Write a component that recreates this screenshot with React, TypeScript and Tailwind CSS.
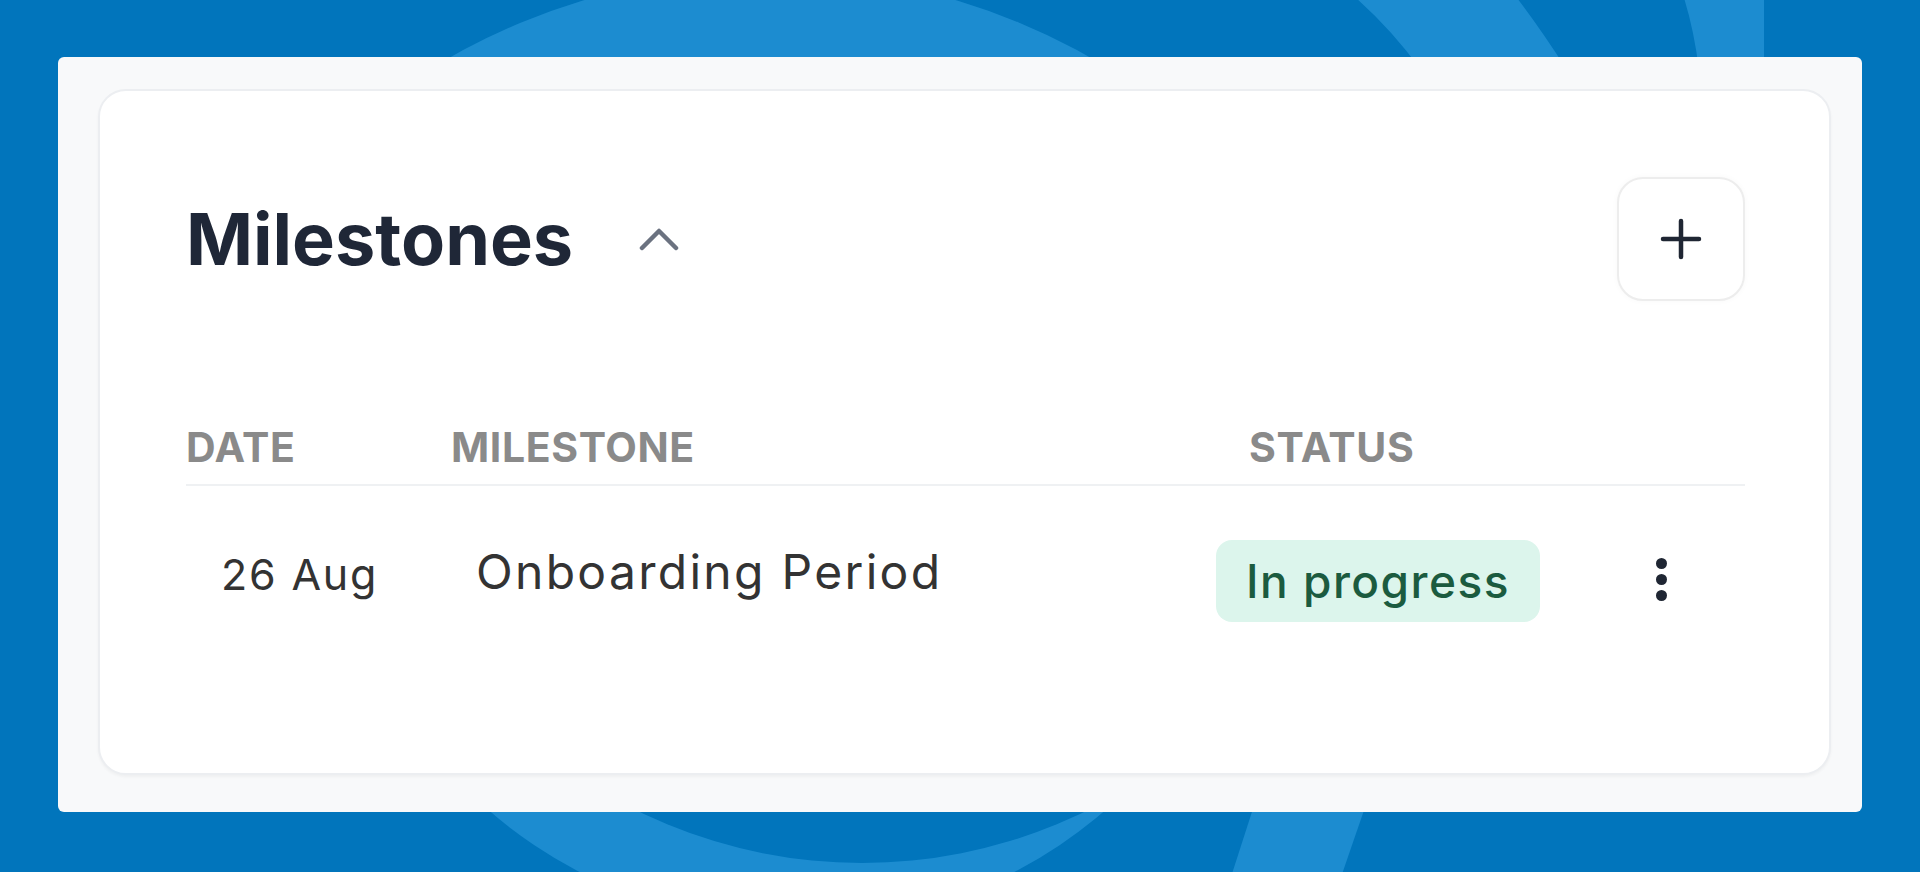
import React from "react";

function Background() {
  return (
    <svg
      className="absolute inset-0"
      width={1920}
      height={872}
      viewBox="0 0 1920 872"
      aria-hidden="true"
    >
      <defs>
        <clipPath id="topClip">
          <rect x="0" y="0" width="1920" height="120" />
        </clipPath>
        <clipPath id="bottomClip">
          <rect x="0" y="760" width="1920" height="112" />
        </clipPath>
      </defs>
      <g clipPath="url(#topClip)" fill="#1c8cd0">
        <circle cx="770" cy="623" r="650" />
        <path d="M1356 -2 L1517 -2 Q1540 28 1567 70 L1421 70 Q1392 30 1356 -2 Z" />
        <path d="M1684 -2 L1764 -2 L1764 70 L1699 70 Q1694 30 1684 -2 Z" />
      </g>
      <g clipPath="url(#bottomClip)">
        <circle cx="797" cy="453" r="472" fill="#1c8cd0" />
        <circle cx="862" cy="354" r="509" fill="#0175bc" />
        <path d="M1259 790 L1371 790 L1340 880 L1230 880 Z" fill="#1c8cd0" />
      </g>
    </svg>
  );
}

function ChevronUp() {
  return (
    <svg width="40" height="26" viewBox="0 0 40 26" fill="none">
      <polyline
        points="3,22 20,5 37,22"
        stroke="#6b7280"
        strokeWidth="4.5"
        strokeLinecap="round"
        strokeLinejoin="round"
      />
    </svg>
  );
}

function PlusIcon() {
  return (
    <svg width="42" height="42" viewBox="0 0 42 42" fill="none">
      <path
        d="M21 3 V39 M3 21 H39"
        stroke="#1f2633"
        strokeWidth="4.5"
        strokeLinecap="round"
      />
    </svg>
  );
}

export default function App() {
  return (
    <div
      className="relative w-[1920px] h-[872px] overflow-hidden bg-[#0175bc]"
      style={{ fontFamily: "Inter, 'Noto Sans', 'Liberation Sans', sans-serif" }}
    >
      <Background />
      <div className="relative flex h-full pt-[57px] pb-[60px] pl-[58px] pr-[58px]">
        <div className="flex flex-1 bg-[#f8f9fa] rounded-[6px] pl-[40px] pr-[31px] pt-[32px] pb-[37px]">
          <div className="flex flex-1 flex-col bg-white border-2 border-[#eceef1] rounded-[28px] shadow-[0_2px_3px_rgba(0,0,0,0.04)] pl-[86px] pr-[84px] pt-[86px]">
            {/* Title row */}
            <div className="flex items-center justify-between h-[124px]">
              <div className="flex items-center gap-[66px]">
                <h2 className="text-[72px] leading-none font-bold text-[#1f2737]">
                  Milestones
                </h2>
                <ChevronUp />
              </div>
              <button className="flex items-center justify-center w-[128px] h-[124px] rounded-[26px] border-2 border-[#ededed] bg-white shadow-[0_0_6px_rgba(0,0,0,0.03)]">
                <PlusIcon />
              </button>
            </div>

            {/* Table header */}
            <div className="flex mt-[126px] pb-[16px] border-b-2 border-[#eff1f3] text-[41px] leading-none font-bold tracking-[0.6px] text-[#8a8a8a]">
              <div className="w-[265px]">DATE</div>
              <div className="w-[765px]">MILESTONE</div>
              <div className="pl-[33px]">STATUS</div>
            </div>

            {/* Row */}
            <div className="flex items-start pt-[54px]">
              <div className="w-[265px] pl-[35px] mt-[13px] text-[43px] leading-none tracking-[1.8px] text-[#333333]">
                26 Aug
              </div>
              <div className="w-[765px] pl-[25px] mt-[8px] text-[48px] leading-none tracking-[2.3px] text-[#333333]">
                Onboarding Period
              </div>
              <div className="flex items-center h-[82px] px-[30px] rounded-[16px] bg-[#dcf5ec] text-[46px] leading-none font-medium tracking-[1.5px] text-[#1b5b3f]">
                In progress
              </div>
              <div className="flex flex-col items-center gap-[5px] ml-[114px] mt-[18px] w-[14px]">
                <span className="w-[11px] h-[11px] rounded-full bg-[#1f2633]" />
                <span className="w-[11px] h-[11px] rounded-full bg-[#1f2633]" />
                <span className="w-[11px] h-[11px] rounded-full bg-[#1f2633]" />
              </div>
            </div>
          </div>
        </div>
      </div>
    </div>
  );
}
